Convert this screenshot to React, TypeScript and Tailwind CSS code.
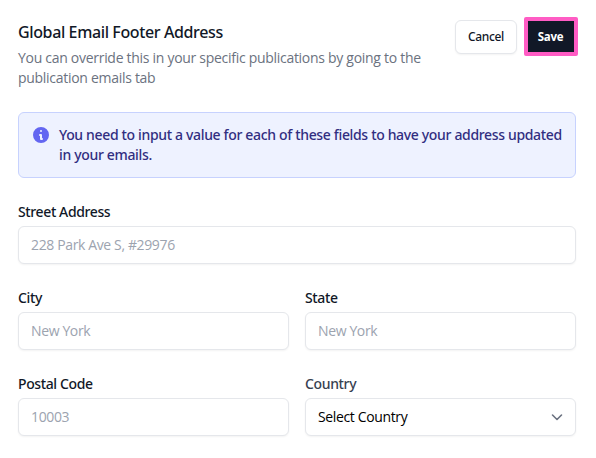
import type { ReactNode } from "react";

function Field({ label, placeholder }: { label: string; placeholder: string }) {
  return (
    <label className="flex flex-col gap-1">
      <span className="font-['Noto_Sans',sans-serif] text-sm font-medium tracking-[-0.38px] text-[#111827]">{label}</span>
      <input
        className="h-[38px] w-full rounded-md border border-[#e5e7eb] bg-white px-3 pb-0.5 text-sm tracking-[-0.37px] text-gray-900 shadow-xs outline-none placeholder:text-[#9ca3af]"
        placeholder={placeholder}
      />
    </label>
  );
}

function Notice({ children }: { children: ReactNode }) {
  return (
    <div className="mt-6 flex gap-2 rounded-md border border-[#c7d2fe] bg-[#eef2ff] p-3">
      <svg viewBox="0 0 20 20" className="size-5 shrink-0 fill-[#6366f1]">
        <path fillRule="evenodd" clipRule="evenodd" d="M18 10a8 8 0 11-16 0 8 8 0 0116 0zm-7-4a1 1 0 11-2 0 1 1 0 012 0zM9 9a1 1 0 000 2v3a1 1 0 001 1h1a1 1 0 100-2v-3a1 1 0 00-1-1H9z" />
      </svg>
      <p className="font-['Noto_Sans',sans-serif] text-sm font-medium tracking-[-0.34px] whitespace-nowrap text-[#312e81]">{children}</p>
    </div>
  );
}

export default function App() {
  return (
    <main className="h-[458px] w-[596px] overflow-hidden bg-white pt-5 pr-5 pl-[18px] font-['Open_Sans','Noto_Sans',sans-serif]">
      <header className="flex h-[68px] items-start justify-between">
        <div className="flex flex-col gap-1 whitespace-nowrap">
          <h1 className="font-['Noto_Sans',sans-serif] text-base leading-6 font-medium tracking-[-0.38px] text-[#111827]">Global Email Footer Address</h1>
          <p className="text-sm tracking-[-0.29px] text-[#6b7280]">
            You can override this in your specific publications by going to the
            <br />
            publication emails tab
          </p>
        </div>
        <div className="-mr-0.5 flex items-start gap-[7px]">
          <button className="h-[34px] w-[62px] rounded-md border border-[#e5e7eb] bg-white font-['Noto_Sans',sans-serif] text-xs font-medium tracking-[-0.35px] text-[#111827] shadow-xs">Cancel</button>
          <button className="-mt-[3px] h-[39px] w-[54px] rounded-xs border-4 border-[#ff5cc4] bg-[#111827] pt-px pr-px text-[11.5px] font-bold tracking-[-0.3px] text-white">Save</button>
        </div>
      </header>
      <Notice>
        You need to input a value for each of these fields to have your address updated
        <br />
        in your emails.
      </Notice>
      <form className="mt-6 flex flex-col gap-6">
        <Field label="Street Address" placeholder="228 Park Ave S, #29976" />
        <div className="grid grid-cols-2 gap-x-4 gap-y-6">
          <Field label="City" placeholder="New York" />
          <Field label="State" placeholder="New York" />
          <Field label="Postal Code" placeholder="10003" />
          <div className="flex flex-col gap-1">
            <span className="font-['Noto_Sans',sans-serif] text-sm font-medium tracking-[-0.35px] text-[#374151]">Country</span>
            <button type="button" className="flex h-[38px] items-center justify-between rounded-md border border-[#e5e7eb] bg-white pr-2 pl-3 text-sm tracking-[-0.36px] text-black shadow-xs">
              <span>Select Country</span>
              <svg viewBox="0 0 20 20" className="size-5 fill-none stroke-[#6b7280] stroke-[1.6]" strokeLinecap="round" strokeLinejoin="round">
                <path d="M5.5 8l4.5 4.5L14.5 8" />
              </svg>
            </button>
          </div>
        </div>
      </form>
    </main>
  );
}
